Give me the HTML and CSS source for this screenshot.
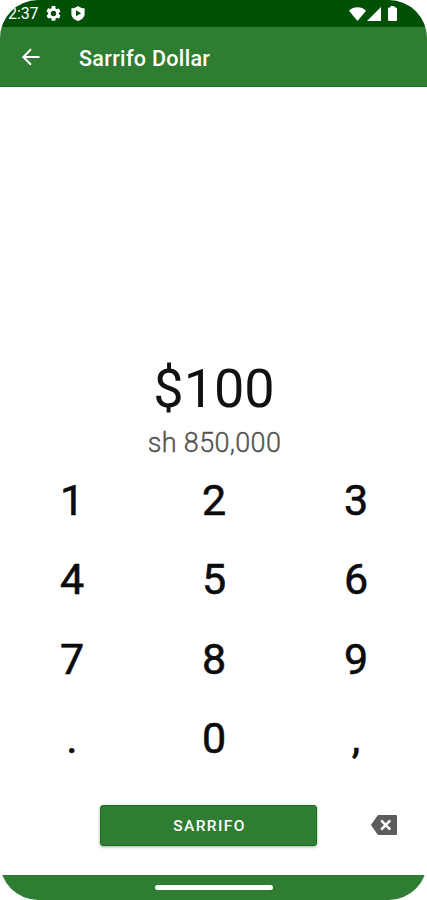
FILE: index.html
```html
<!DOCTYPE html>
<html lang="so">
<head>
<meta charset="utf-8">
<title>Sarrifo Dollar</title>
<link rel="stylesheet" href="styles.css">
</head>
<body>
<main class="phone">
  <div class="status">
    <span class="clock">2:37</span>
    <svg class="gear" viewBox="2 2 20 20"><path fill="#fff" fill-rule="evenodd" d="M19.14 12.94c.04-.3.06-.61.06-.94s-.02-.64-.07-.94l2.03-1.58c.18-.14.23-.41.12-.61l-1.92-3.32c-.12-.22-.37-.29-.59-.22l-2.39.96c-.5-.38-1.03-.7-1.62-.94l-.36-2.54A.48.48 0 0 0 13.92 2h-3.84c-.24 0-.43.17-.47.41l-.36 2.54c-.59.24-1.13.57-1.62.94l-2.39-.96c-.22-.08-.47 0-.59.22L2.74 8.87c-.12.21-.08.47.12.61l2.03 1.58c-.05.3-.09.63-.09.94s.02.64.07.94l-2.03 1.58c-.18.14-.23.41-.12.61l1.92 3.32c.12.22.37.29.59.22l2.39-.96c.5.38 1.03.7 1.62.94l.36 2.54c.05.24.24.41.48.41h3.84c.24 0 .44-.17.47-.41l.36-2.54c.59-.24 1.13-.56 1.62-.94l2.39.96c.22.08.47 0 .59-.22l1.92-3.32c.12-.22.07-.47-.12-.61zM12 15.6a3.6 3.6 0 1 1 0-7.2 3.6 3.6 0 0 1 0 7.2z"/></svg>
    <svg class="shield" viewBox="0 0 14 15"><path fill="#fff" fill-rule="evenodd" d="M7 0C9 1.7 11 2.2 13.6 2.3V8c0 3.3-2.8 5.8-6.6 7C3.2 13.8.4 11.3.4 8V2.3C3 2.2 5 1.7 7 0zM5 4.3v6L10.2 7.3z"/></svg>
    <span class="spacer"></span>
    <svg class="wifi" viewBox="0 0 17 14"><path fill="#fff" d="M0 3.7C4.5-.9 12.5-.9 17 3.7L8.5 14z"/></svg>
    <svg class="signal" viewBox="0 0 14 14"><path fill="#fff" d="M14 0v14H0z"/></svg>
    <svg class="battery" viewBox="0 0 9 15"><path fill="#fff" d="M2.5 0h4v1.5H8q1 0 1 1V14q0 1-1 1H1q-1 0-1-1V2.5q0-1 1-1h1.5z"/></svg>
  </div>
  <header class="bar">
    <svg class="back" viewBox="0 0 18 18"><path d="M17.5 9H1.5M9 1.2L1.3 9L9 16.8" fill="none" stroke="#fff" stroke-width="2"/></svg>
    <h1>Sarrifo Dollar</h1>
  </header>
  <section class="amount">
    <div class="dollars">$100</div>
    <div class="shillings">sh 850,000</div>
  </section>
  <section class="keys">
    <span>1</span><span>2</span><span>3</span>
    <span>4</span><span>5</span><span>6</span>
    <span>7</span><span>8</span><span>9</span>
    <span>.</span><span>0</span><span>,</span>
  </section>
  <div class="actions">
    <button class="submit">SARRIFO</button>
    <svg class="erase" viewBox="0 0 26 20"><path fill="#5c5c5c" d="M8 0h17q1 0 1 1v18q0 1-1 1H8q-1 0-1.6-.8L.3 10.6q-.4-.6 0-1.2L6.4.8Q7 0 8 0z"/><path d="M10.200 5.300l9 9.400M19.200 5.300l-9 9.400" stroke="#fff" stroke-width="2.500"/></svg>
  </div>
  <footer class="nav"><span class="pill"></span></footer>
</main>
</body>
</html>
```
FILE: styles.css
```css
* { box-sizing: border-box; }
body { margin: 0; background: #fff; font-family: Roboto, sans-serif; }
svg { display: block; flex: none; }
.phone {
  width: 427px;
  height: 900px;
  display: flex;
  flex-direction: column;
  overflow: hidden;
  border-radius: 38px;
  background: #fff;
}
.status {
  height: 27px;
  flex: none;
  display: flex;
  align-items: center;
  padding: 0 30px 0 8px;
  background: #005005;
  color: #fff;
}
.clock { width: 38px; font-size: 16px; line-height: 27px; letter-spacing: -0.1px; }
.gear { width: 15px; height: 15px; }
.shield { width: 14px; height: 15px; margin-left: 10px; }
.spacer { flex: 1; }
.wifi { width: 17px; height: 14px; }
.signal { width: 14px; height: 14px; margin-left: 1px; }
.battery { width: 9px; height: 15px; margin-left: 7px; }
.bar {
  height: 60px;
  flex: none;
  display: flex;
  align-items: center;
  padding-left: 22px;
  background: #2f7d32;
  border-bottom: 1px solid #157019;
  color: #fff;
}
.back { width: 18px; height: 18px; }
h1 { margin: 4px 0 0 39px; font-size: 21.5px; font-weight: 500; line-height: 28px; letter-spacing: 0.32px; }
.amount { height: 374px; flex: none; padding-top: 268px; text-align: center; }
.dollars { height: 68px; font-size: 54px; line-height: 67px; padding-left: 1px; color: #111; }
.shillings {
  height: 38px;
  font-size: 27px;
  font-weight: 300;
  line-height: 40px;
  letter-spacing: 0.33px;
  padding-left: 2px;
  color: #505050;
  -webkit-text-stroke: 0.35px #505050;
}
.keys {
  flex: none;
  display: grid;
  grid-template-columns: repeat(3, 1fr);
  grid-template-rows: repeat(4, 79.4px);
  padding-left: 1px;
  text-align: center;
  font-size: 43px;
  font-weight: 400;
  line-height: 79.4px;
  color: #0b0b0b;
  -webkit-text-stroke: 0.6px #0b0b0b;
}
.actions { flex: 1; display: flex; align-items: flex-start; padding: 26px 0 0 100px; }
.submit {
  width: 217px;
  height: 41px;
  padding: 1px 0 0 2px;
  border: 1px solid #15751b;
  border-radius: 3px;
  background: #2f7d32;
  box-shadow: 0 1px 3px rgba(0, 0, 0, 0.35);
  color: #fff;
  font: 500 15.5px/38px Roboto, sans-serif;
  letter-spacing: 1.4px;
}
.erase { width: 26px; height: 20px; margin: 10.4px 0 0 54px; }
.nav {
  height: 25px;
  flex: none;
  display: flex;
  justify-content: center;
  padding-top: 10px;
  background: #2f7d32;
}
.pill { width: 118px; height: 5px; border-radius: 3px; background: #fff; }
```
